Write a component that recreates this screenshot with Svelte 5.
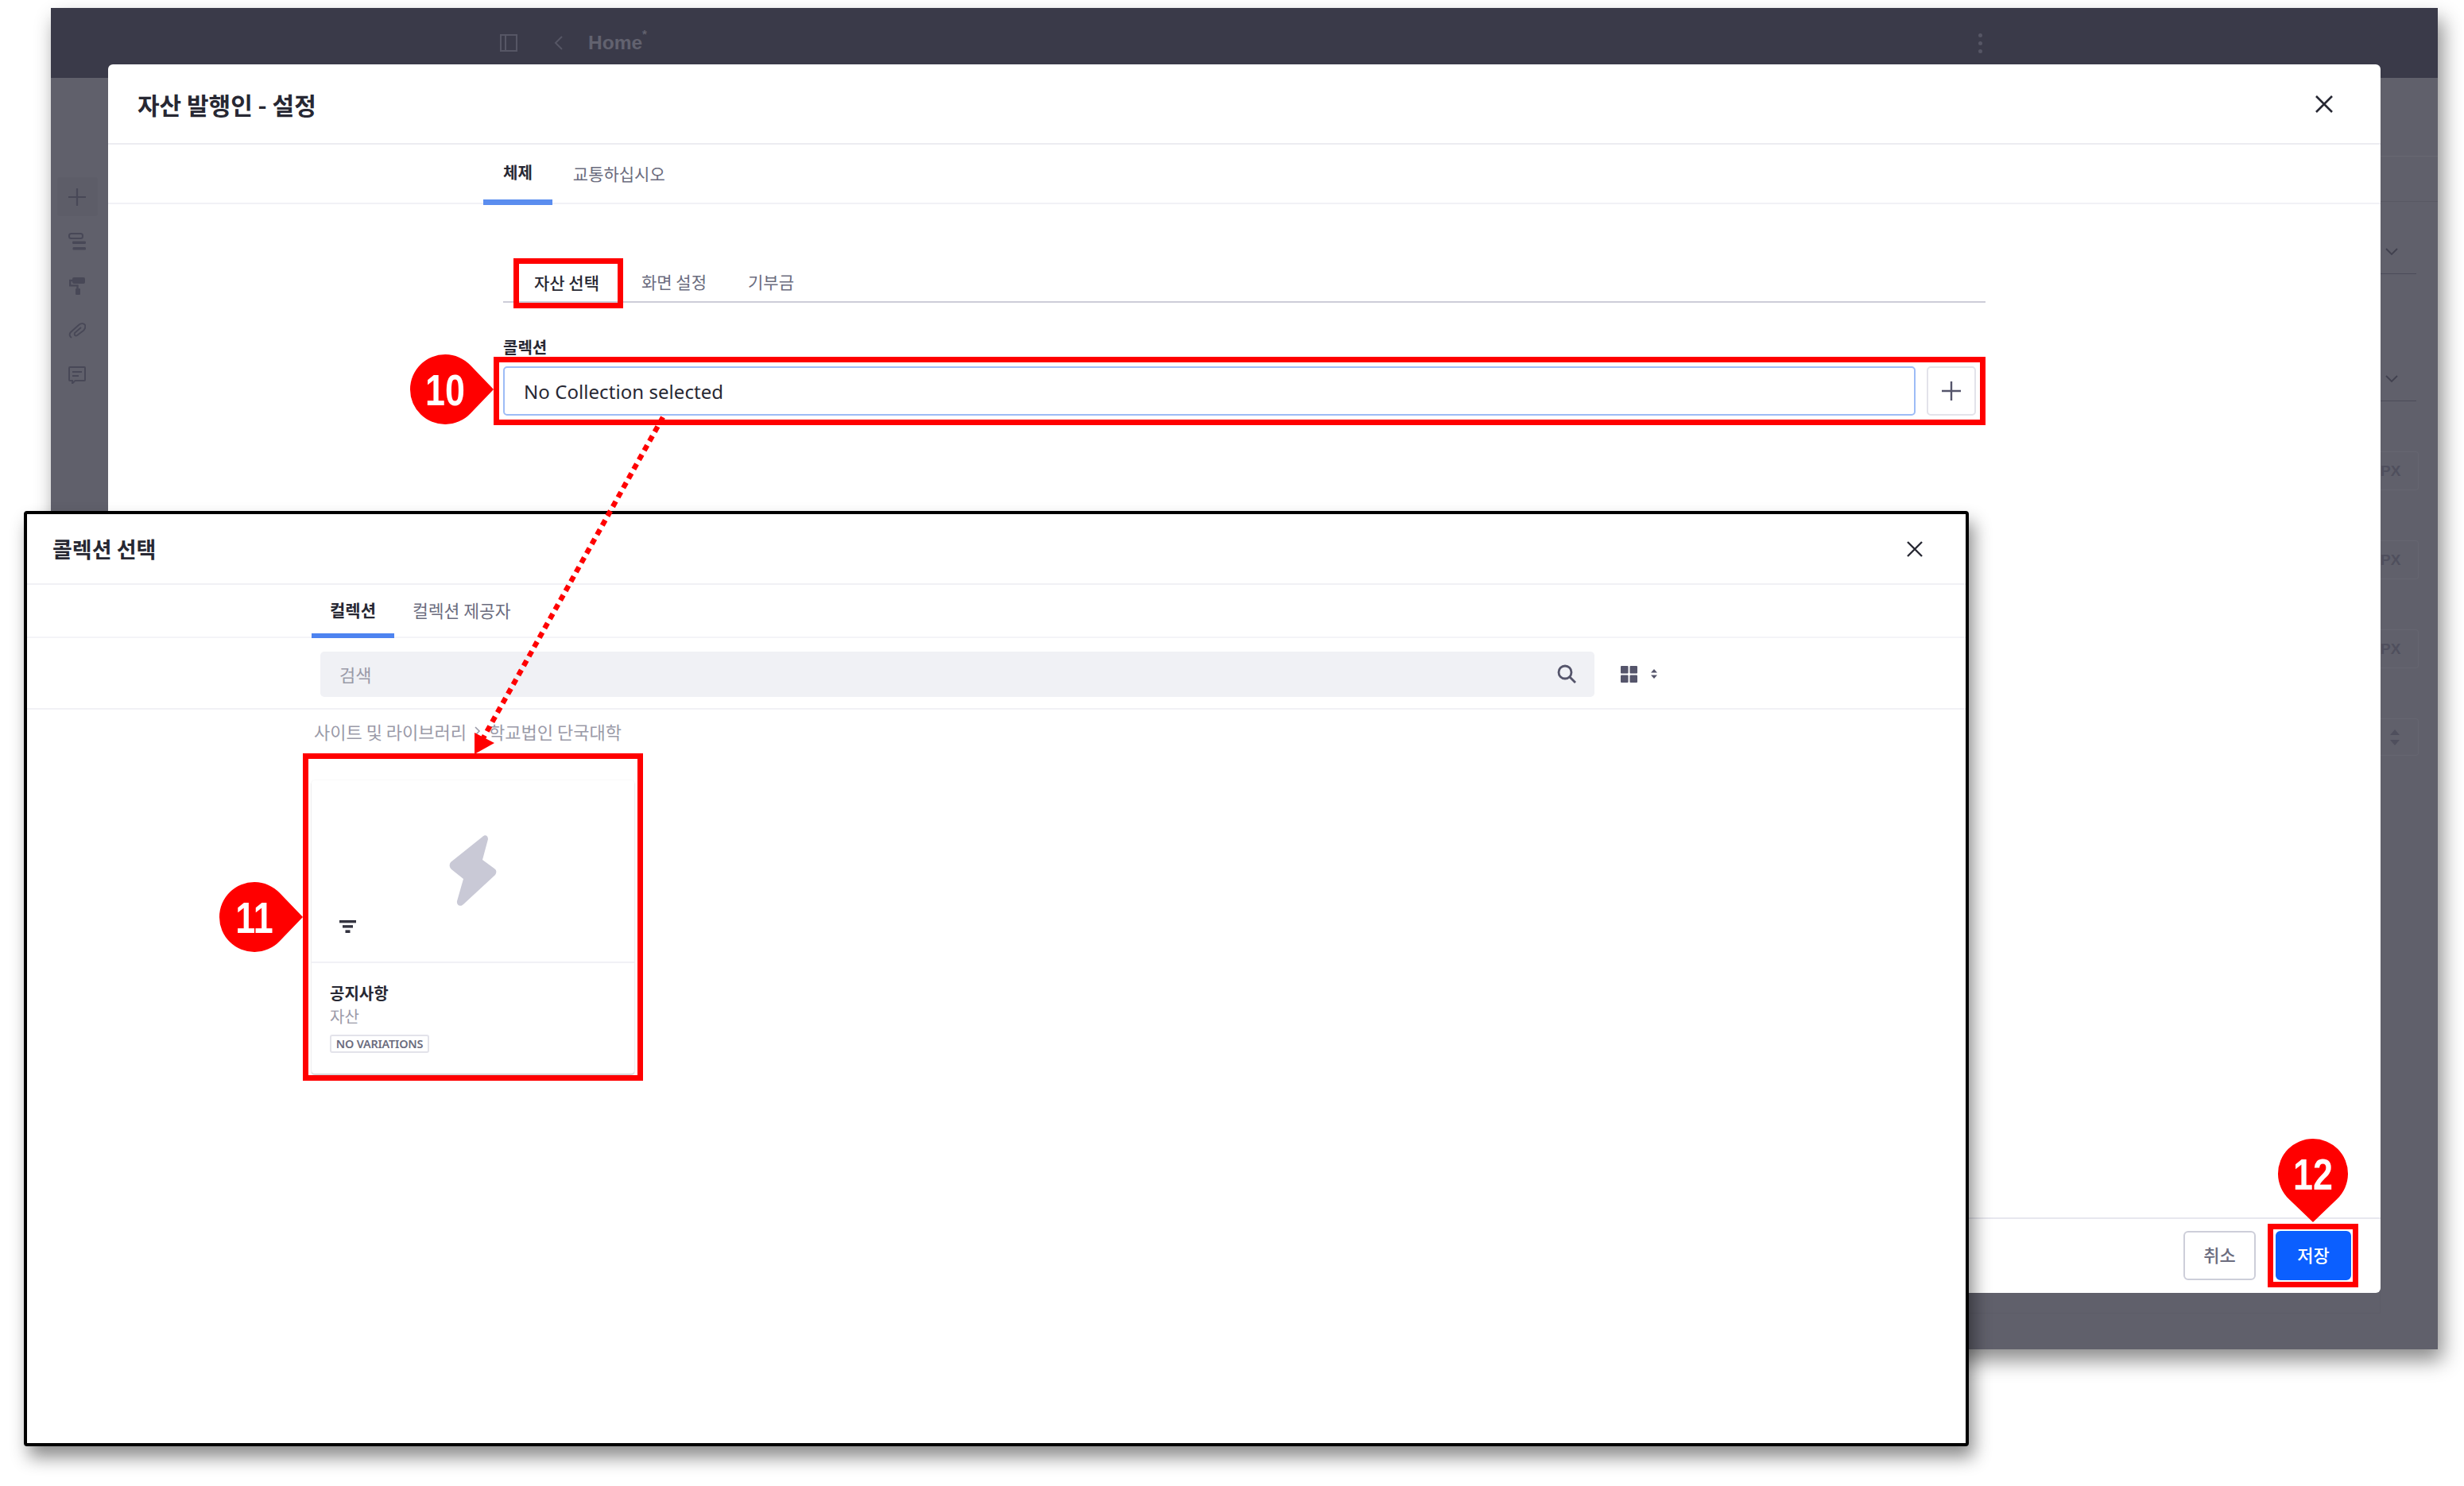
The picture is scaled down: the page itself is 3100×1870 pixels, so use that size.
<script>
    const markers = [
        { label: '10', x: 560, y: 490, rotate: 0 },
        { label: '11', x: 320, y: 1154, rotate: 0 },
        { label: '12', x: 2910, y: 1477, rotate: 90 }
    ];
    const pxRows = [1, 2, 3];
</script>

<div class="page">
    <section class="shot">
        <header class="topbar">
            <svg class="panel-icon" viewBox="0 0 22 22" width="22" height="22">
                <rect x="1" y="1" width="20" height="20" fill="none" stroke="currentColor" stroke-width="2" />
                <path d="M7 1v20" stroke="currentColor" stroke-width="2" />
            </svg>
            <svg class="back-icon" viewBox="0 0 13 20" width="13" height="20">
                <path d="M11 2 3 10l8 8" fill="none" stroke="currentColor" stroke-width="2" />
            </svg>
            <span class="page-name">Home<sup>*</sup></span>
            <span class="dots"><i></i><i></i><i></i></span>
        </header>

        <div class="workspace">
            <aside class="sidebar">
                <div class="add-btn">
                    <svg viewBox="0 0 22 22" width="22" height="22"><path d="M11 0v22M0 11h22" stroke="currentColor" stroke-width="2.2" /></svg>
                </div>
                <svg viewBox="0 0 22 22" width="22" height="22">
                    <rect x="1" y="1" width="17" height="6" rx="2.5" fill="none" stroke="currentColor" stroke-width="2" />
                    <rect x="5" y="10.5" width="17" height="3.6" rx="1.4" fill="currentColor" />
                    <rect x="5.5" y="18" width="16.5" height="3.6" rx="1.4" fill="currentColor" />
                </svg>
                <svg viewBox="0 0 22 22" width="22" height="22">
                    <rect x="5" y="0" width="16" height="8" rx="2" fill="currentColor" />
                    <path d="M5 4H2.2v6.4H11.5v4" fill="none" stroke="currentColor" stroke-width="2.4" />
                    <rect x="9" y="14" width="6" height="8" rx="1" fill="currentColor" />
                </svg>
                <svg viewBox="0 0 22 22" width="22" height="22">
                    <path d="M4 20c-3-2-3-5-1-7L13 4c3-3 7-2 8 0 1 3 0 5-2 7l-8 6c-2 1.400-4 0-3-3l8-7" fill="none" stroke="currentColor" stroke-width="1.900" />
                </svg>
                <svg viewBox="0 0 22 22" width="22" height="22">
                    <path d="M2 1h18a1 1 0 0 1 1 1v15a1 1 0 0 1-1 1H8.500L5 21.500V18H2a1 1 0 0 1-1-1V2a1 1 0 0 1 1-1z" fill="none" stroke="currentColor" stroke-width="2" />
                    <path d="M5 7h12M5 12h8" stroke="currentColor" stroke-width="2.200" />
                </svg>
            </aside>

            <div class="canvas"><div class="canvas-area"></div></div>

            <aside class="props">
                <div class="props-head"></div>
                <div class="props-tabs"></div>
                <div class="select-row first">
                    <svg viewBox="0 0 16 10" width="16" height="10"><path d="M1 1l7 7 7-7" fill="none" stroke="currentColor" stroke-width="1.800" /></svg>
                </div>
                <div class="select-row">
                    <svg viewBox="0 0 16 10" width="16" height="10"><path d="M1 1l7 7 7-7" fill="none" stroke="currentColor" stroke-width="1.800" /></svg>
                </div>
                {#each pxRows as row (row)}
                    <div class="unit">PX</div>
                {/each}
                <div class="unit stepper">
                    <svg viewBox="0 0 12 20" width="12" height="20"><path d="M6 0l6 7H0zM6 20l6-7H0z" fill="currentColor" /></svg>
                </div>
            </aside>
        </div>

        <div class="modal">
            <div class="modal-head">
                <h2>자산 발행인 - 설정</h2>
                <svg class="close" viewBox="0 0 22 22" width="22" height="22"><path d="M1 1l20 20M21 1 1 21" stroke="currentColor" stroke-width="2.600" /></svg>
            </div>
            <nav class="modal-tabs">
                <span class="tab active">체제</span>
                <span class="tab">교통하십시오</span>
            </nav>
            <div class="modal-body">
                <div class="subtabs">
                    <span class="subtab active">자산 선택</span>
                    <span class="subtab">화면 설정</span>
                    <span class="subtab">기부금</span>
                </div>
                <div class="field-label">콜렉션</div>
                <div class="field-row">
                    <div class="input">No Collection selected</div>
                    <div class="plus">
                        <svg viewBox="0 0 24 24" width="24" height="24"><path d="M12 0v24M0 12h24" stroke="currentColor" stroke-width="2.400" /></svg>
                    </div>
                </div>
            </div>
            <div class="modal-foot">
                <button class="btn">취소</button>
                <div class="save-box">
                    <button class="btn primary">저장</button>
                </div>
            </div>
        </div>
    </section>

    <section class="picker">
        <div class="picker-head">
            <h2>콜렉션 선택</h2>
            <svg class="close" viewBox="0 0 20 20" width="20" height="20"><path d="M1 1l18 18M19 1 1 19" stroke="currentColor" stroke-width="2.400" /></svg>
        </div>
        <nav class="picker-tabs">
            <span class="ptab active">컬렉션</span>
            <span class="ptab">컬렉션 제공자</span>
        </nav>
        <div class="search-row">
            <div class="search">
                <span>검색</span>
                <svg viewBox="0 0 24 24" width="24" height="24">
                    <circle cx="10" cy="10" r="8" fill="none" stroke="currentColor" stroke-width="2.800" />
                    <path d="M16 16l7 7" stroke="currentColor" stroke-width="2.800" />
                </svg>
            </div>
            <svg class="grid-icon" viewBox="0 0 21 21" width="21" height="21">
                <rect width="9.500" height="9.500" rx="1" fill="currentColor" />
                <rect x="11.500" width="9.500" height="9.500" rx="1" fill="currentColor" />
                <rect y="11.500" width="9.500" height="9.500" rx="1" fill="currentColor" />
                <rect x="11.500" y="11.500" width="9.500" height="9.500" rx="1" fill="currentColor" />
            </svg>
            <svg class="sort-icon" viewBox="0 0 8 12" width="8" height="12"><path d="M4 0l4 4.500H0zM4 12l4-4.500H0z" fill="currentColor" /></svg>
        </div>
        <div class="crumbs">
            <span>사이트 및 라이브러리</span>
            <svg viewBox="0 0 8 12" width="8" height="12"><path d="M1 1l5 5-5 5" fill="none" stroke="currentColor" stroke-width="1.600" /></svg>
            <span>학교법인 단국대학</span>
        </div>
        <div class="card-box">
            <div class="card">
                <div class="card-thumb">
                    <svg class="bolt" viewBox="0 0 60 91" width="60" height="91">
                        <path d="M42 3c3-3 7-2 7 3L42 32l15 11c3 2 3 5 1 8L18 88c-4 4-9 1-8-4l8-28L3 44c-3-3-3-6-1-9z" fill="currentColor" />
                    </svg>
                    <svg class="filter" viewBox="0 0 21 16" width="21" height="16">
                        <rect width="21" height="3.400" fill="currentColor" />
                        <rect x="4" y="6.200" width="13" height="3.400" fill="currentColor" />
                        <rect x="7.500" y="12.400" width="6" height="3.600" fill="currentColor" />
                    </svg>
                </div>
                <div class="card-info">
                    <div class="card-title">공지사항</div>
                    <div class="card-sub">자산</div>
                    <span class="badge">NO VARIATIONS</span>
                </div>
            </div>
        </div>
    </section>

    <svg class="notes" viewBox="0 0 3100 1870" width="3100" height="1870">
        <path d="M834 525 605 934" stroke="#f00" stroke-width="6.500" stroke-dasharray="7.500 6" fill="none" />
        <path d="M597 949V922L622 935Z" fill="#f00" />
        {#each markers as m (m.label)}
            <g transform="translate({m.x} {m.y})">
                <path d="M61 0 31.700 30.500A44 44 0 1 1 31.700 -30.500Z" fill="#f00" transform="rotate({m.rotate})" />
                <text class="num" transform="scale(.8 1)" y="20" text-anchor="middle">{m.label}</text>
            </g>
        {/each}
    </svg>
</div>

<style>
    :global(body) {
        margin: 0;
        background: #fff;
    }

    .page {
        position: relative;
        width: 3100px;
        height: 1870px;
        overflow: hidden;
        background: #fff;
        font-family: "Noto Sans CJK KR", "Noto Sans", sans-serif;
        color: #272833;
    }

    h2 {
        margin: 0;
        font-size: 30px;
        font-weight: 700;
    }

    .close {
        color: #272833;
    }

    /* background screenshot */
    .shot {
        position: absolute;
        left: 64px;
        top: 10px;
        width: 3003px;
        height: 1688px;
        display: flex;
        flex-direction: column;
        background: #60606b;
        box-shadow: 6px 14px 24px rgba(0, 0, 0, 0.45);
    }

    .topbar {
        position: relative;
        height: 88px;
        flex: none;
        display: flex;
        align-items: center;
        padding: 0 0 0 565px;
        background: #3a3a49;
        color: #565665;
    }

    .back-icon {
        margin-left: 45px;
    }

    .page-name {
        margin-left: 31px;
        font-family: "Liberation Sans", sans-serif;
        font-size: 24.5px;
        font-weight: 700;
        color: #62626f;
    }

    .page-name sup {
        font-size: 15px;
        line-height: 0;
        vertical-align: 14px;
    }

    .dots {
        margin-left: 1675px;
        display: flex;
        flex-direction: column;
        gap: 5px;
    }

    .dots i {
        width: 5px;
        height: 5px;
        border-radius: 50%;
        background: #565665;
    }

    .workspace {
        flex: 1;
        display: flex;
        min-height: 0;
    }

    .sidebar {
        width: 66px;
        flex: none;
        display: flex;
        flex-direction: column;
        align-items: center;
        gap: 34px;
        padding: 125px 5px 0 0;
        color: #484857;
    }

    .add-btn {
        width: 51px;
        height: 49px;
        margin-bottom: -13px;
        display: flex;
        align-items: center;
        justify-content: center;
        border-radius: 4px;
        background: #5d5d68;
    }

    .canvas {
        flex: 1;
    }

    .canvas-area {
        height: 1554px;
        border-right: 1px solid #5c5c67;
        border-bottom: 1px solid #5c5c67;
    }

    .props {
        width: 72px;
        flex: none;
        display: flex;
        flex-direction: column;
        color: #41414f;
    }

    .props-head {
        height: 99px;
        box-sizing: border-box;
        border-bottom: 1px solid #686872;
    }

    .props-tabs {
        height: 57px;
        box-sizing: border-box;
        border-bottom: 1px solid #595964;
    }

    .select-row {
        height: 91px;
        box-sizing: border-box;
        margin: 69px 27px 0 0;
        display: flex;
        align-items: flex-end;
        padding: 0 0 22px 6px;
        border-bottom: 1px solid #4c4c59;
    }

    .select-row.first {
        margin-top: 0;
    }

    .unit {
        height: 49px;
        margin: 63px 24px 0 0;
        display: flex;
        align-items: center;
        box-sizing: border-box;
        border: 1px solid #666671;
        border-left: 0;
        border-radius: 0 4px 4px 0;
        font-family: "Liberation Sans", sans-serif;
        font-size: 19px;
        font-weight: 700;
        color: #4f4f5d;
    }

    .stepper {
        height: 47px;
        padding-left: 12px;
    }

    /* settings modal */
    .modal {
        position: absolute;
        left: 72px;
        top: 71px;
        width: 2859px;
        height: 1546px;
        display: flex;
        flex-direction: column;
        border-radius: 6px;
        background: #fff;
    }

    .modal-head {
        height: 101px;
        flex: none;
        box-sizing: border-box;
        display: flex;
        align-items: center;
        justify-content: space-between;
        padding: 0 60px 0 37px;
        border-bottom: 2px solid #ececf1;
    }

    .modal-tabs {
        height: 75px;
        flex: none;
        box-sizing: border-box;
        display: flex;
        padding-left: 472px;
        border-bottom: 2px solid #f1f1f6;
    }

    .tab {
        display: flex;
        align-items: center;
        height: 76px;
        padding: 0 25px 4px 26px;
        box-sizing: border-box;
        font-size: 21px;
        color: #6b6c7e;
    }

    .tab.active {
        border-bottom: 7px solid #5b8def;
        padding: 0 25px;
        font-size: 20px;
        font-weight: 700;
        color: #272833;
    }

    .modal-body {
        flex: 1;
        padding: 75px 0 0 497px;
    }

    .subtabs {
        width: 1865px;
        height: 49px;
        display: flex;
        padding-left: 20px;
        border-bottom: 2px solid #cdcdd8;
        box-sizing: border-box;
    }

    .subtab {
        display: flex;
        align-items: center;
        padding: 0 26px 4px;
        font-size: 21px;
        color: #6b6c7e;
    }

    .subtab.active {
        height: 49px;
        box-sizing: border-box;
        padding: 0 23px 4px 19px;
        margin-right: 4px;
        outline: 7px solid #f00;
        font-weight: 500;
        color: #272833;
    }

    .field-label {
        margin-top: 41px;
        height: 30px;
        line-height: 30px;
        font-size: 20px;
        font-weight: 700;
    }

    .field-row {
        width: 1853px;
        height: 62px;
        margin-top: 9px;
        display: flex;
        gap: 14px;
        outline: 7px solid #f00;
        outline-offset: 5px;
    }

    .input {
        flex: 1;
        display: flex;
        align-items: center;
        box-sizing: border-box;
        padding-left: 24px;
        border: 2px solid #9dbcf6;
        border-radius: 5px;
        font-family: "Noto Sans", sans-serif;
        font-size: 24px;
        letter-spacing: 0.06px;
        color: #272833;
    }

    .plus {
        width: 62px;
        flex: none;
        display: flex;
        align-items: center;
        justify-content: center;
        box-sizing: border-box;
        border: 2px solid #e3e3ea;
        border-radius: 5px;
        color: #55556b;
    }

    .modal-foot {
        height: 95px;
        flex: none;
        box-sizing: border-box;
        display: flex;
        justify-content: flex-end;
        align-items: flex-start;
        padding: 6px 28px 0 0;
        border-top: 2px solid #e7e7ee;
    }

    .btn {
        width: 91px;
        height: 62px;
        margin: 9px 15px 0 0;
        padding: 0 0 4px;
        border: 2px solid #cdced9;
        border-radius: 6px;
        background: #fff;
        font-family: inherit;
        font-size: 22px;
        font-weight: 500;
        color: #6b6c7e;
    }

    .save-box {
        width: 114px;
        height: 80px;
        box-sizing: border-box;
        padding: 2px 2px 2px 3px;
        border: 7px solid #f00;
    }

    .btn.primary {
        display: block;
        width: 95px;
        margin: 0;
        border-color: #0b5fff;
        background: #0b5fff;
        color: #fff;
    }

    /* collection picker */
    .picker {
        position: absolute;
        left: 30px;
        top: 643px;
        width: 2447px;
        height: 1177px;
        box-sizing: border-box;
        display: flex;
        flex-direction: column;
        border: 4px solid #000;
        border-radius: 4px;
        background: #fff;
        box-shadow: 6px 14px 22px rgba(0, 0, 0, 0.45);
    }

    .picker h2 {
        font-size: 27px;
    }

    .picker-head {
        height: 89px;
        flex: none;
        box-sizing: border-box;
        display: flex;
        align-items: center;
        justify-content: space-between;
        padding: 0 54px 0 32px;
        border-bottom: 2px solid #f1f1f5;
    }

    .picker-tabs {
        height: 67px;
        flex: none;
        box-sizing: border-box;
        display: flex;
        padding-left: 358px;
        border-bottom: 2px solid #f4f4f8;
    }

    .ptab {
        display: flex;
        align-items: center;
        height: 67px;
        box-sizing: border-box;
        padding: 0 23px 4px;
        font-size: 21.500px;
        color: #6b6c7e;
    }

    .ptab.active {
        border-bottom: 6px solid #4d83f0;
        padding: 0 23px;
        font-size: 21px;
        font-weight: 700;
        color: #272833;
    }

    .search-row {
        height: 90px;
        flex: none;
        box-sizing: border-box;
        display: flex;
        align-items: center;
        padding: 2px 0 0 369px;
        border-bottom: 2px solid #f1f1f5;
        color: #55556b;
    }

    .search {
        width: 1603px;
        height: 57px;
        box-sizing: border-box;
        display: flex;
        align-items: center;
        justify-content: space-between;
        padding: 0 23px 0 24px;
        border-radius: 5px;
        background: #f0f1f5;
        font-size: 22px;
    }

    .search span {
        color: #9a9aa8;
    }

    .grid-icon {
        margin: 0 0 0 33px;
    }

    .sort-icon {
        margin-left: 17px;
    }

    .crumbs {
        height: 53px;
        flex: none;
        display: flex;
        align-items: center;
        gap: 10px;
        padding: 0 0 0 361px;
        margin-bottom: 2px;
        font-size: 22px;
        color: #9a9aa8;
    }

    .card-box {
        width: 428px;
        height: 412px;
        box-sizing: border-box;
        margin-left: 347px;
        padding: 27px 4px 2px 4px;
        border: 7px solid #f00;
    }

    .card {
        height: 100%;
        display: flex;
        flex-direction: column;
        border-radius: 4px;
        background: #fff;
        box-shadow: 0 2px 2px rgba(39, 40, 51, 0.2), 0 0 2px rgba(39, 40, 51, 0.08);
    }

    .card-thumb {
        position: relative;
        height: 230px;
        flex: none;
        display: flex;
        justify-content: center;
        padding-top: 68px;
        box-sizing: border-box;
        border-bottom: 2px solid #f1f1f6;
    }

    .bolt {
        color: #c9c9d6;
    }

    .filter {
        position: absolute;
        left: 35px;
        top: 176px;
        color: #33333f;
    }

    .card-info {
        flex: 1;
        display: flex;
        flex-direction: column;
        align-items: flex-start;
        padding: 23px 23px 0;
    }

    .card-title {
        font-size: 20px;
        line-height: 30px;
        font-weight: 700;
    }

    .card-sub {
        font-size: 20px;
        line-height: 28px;
        color: #9a9aa8;
    }

    .badge {
        margin-top: 9px;
        height: 23px;
        width: 125px;
        box-sizing: border-box;
        display: flex;
        align-items: center;
        justify-content: center;
        border: 2px solid #e3e3ea;
        border-radius: 3px;
        font-family: "Noto Sans", sans-serif;
        font-size: 14.400px;
        font-weight: 600;
        letter-spacing: -0.2px;
        white-space: nowrap;
        color: #6b6c7e;
    }

    /* annotations */
    .notes {
        position: absolute;
        left: 0;
        top: 0;
        pointer-events: none;
    }

    .num {
        font-family: "Liberation Sans", sans-serif;
        font-size: 56px;
        font-weight: 700;
        fill: #fff;
    }
</style>
